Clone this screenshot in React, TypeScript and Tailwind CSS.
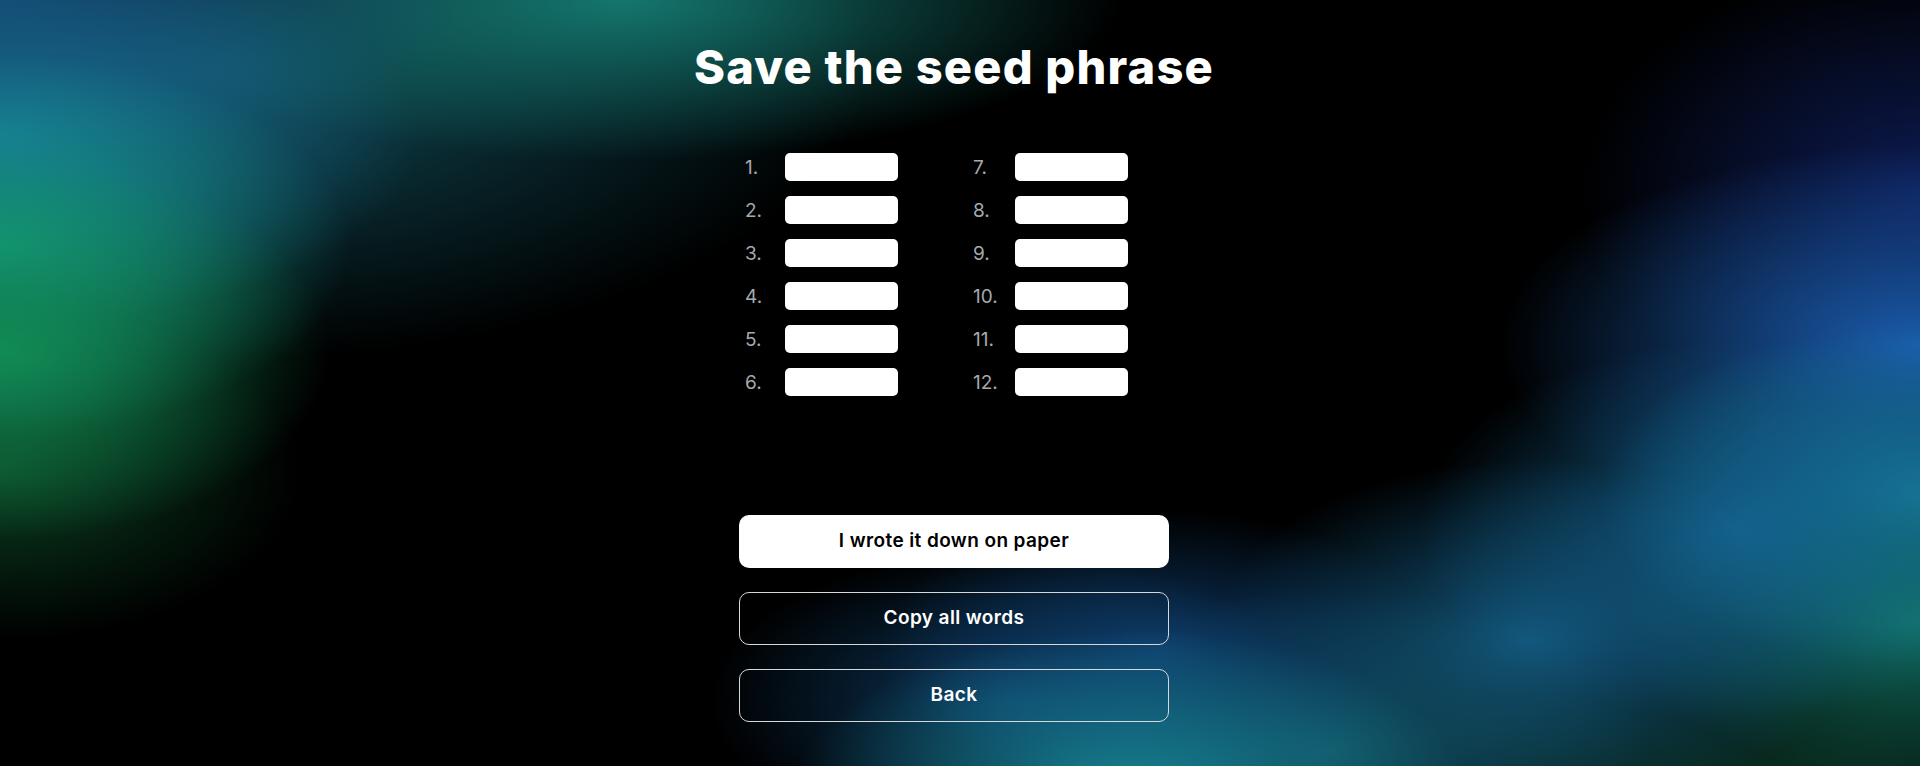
import React from "react";

const left = ["1.", "2.", "3.", "4.", "5.", "6."];
const right = ["7.", "8.", "9.", "10.", "11.", "12."];

function Column({ items, numW }: { items: string[]; numW: string }) {
  return (
    <div className="flex flex-col gap-[15px]">
      {items.map((n) => (
        <div key={n} className="flex items-center h-[28px]">
          <span className={`${numW} text-[19px] leading-none text-[#a6a9ad] font-normal`}>{n}</span>
          <div className="w-[113px] h-[28px] rounded-[5px] bg-white" />
        </div>
      ))}
    </div>
  );
}

const bgLayers =
  "bg-[image:radial-gradient(ellipse_330px_190px_at_0px_350px,rgba(17,140,85,1)_0%,rgba(17,140,85,0)_100%),radial-gradient(ellipse_350px_190px_at_0px_245px,rgba(20,152,132,1)_0%,rgba(20,152,132,0)_100%),radial-gradient(ellipse_420px_190px_at_0px_135px,rgba(24,112,152,1)_0%,rgba(24,112,152,0)_100%),radial-gradient(ellipse_460px_150px_at_0px_0px,rgba(19,64,106,1)_0%,rgba(19,64,106,0)_100%),radial-gradient(ellipse_500px_160px_at_620px_0px,rgba(20,118,110,1)_0%,rgba(20,118,110,0)_100%),radial-gradient(ellipse_650px_300px_at_220px_60px,rgba(18,85,98,0.9)_0%,rgba(18,85,98,0)_100%),radial-gradient(ellipse_300px_170px_at_0px_470px,rgba(12,75,38,0.85)_0%,rgba(12,75,38,0)_100%),radial-gradient(ellipse_340px_170px_at_1130px_800px,rgba(23,136,152,1)_0%,rgba(23,136,152,0)_100%),radial-gradient(ellipse_280px_140px_at_1160px_650px,rgba(16,72,128,0.75)_0%,rgba(16,72,128,0)_100%),radial-gradient(ellipse_300px_150px_at_1010px_700px,rgba(18,78,130,0.7)_0%,rgba(18,78,130,0)_100%),radial-gradient(ellipse_320px_160px_at_1330px_750px,rgba(20,96,118,0.75)_0%,rgba(20,96,118,0)_100%),radial-gradient(ellipse_320px_180px_at_1530px_640px,rgba(20,96,138,0.9)_0%,rgba(20,96,138,0)_100%),radial-gradient(ellipse_320px_190px_at_1740px_530px,rgba(20,102,150,0.9)_0%,rgba(20,102,150,0)_100%),radial-gradient(ellipse_300px_160px_at_1920px_620px,rgba(18,122,104,0.95)_0%,rgba(18,122,104,0)_100%),radial-gradient(ellipse_320px_170px_at_1920px_495px,rgba(22,122,155,1)_0%,rgba(22,122,155,0)_100%),radial-gradient(ellipse_420px_200px_at_1920px_345px,rgba(26,92,172,1)_0%,rgba(26,92,172,0)_100%),radial-gradient(ellipse_340px_230px_at_1920px_190px,rgba(14,30,92,0.9)_0%,rgba(14,30,92,0)_100%),radial-gradient(ellipse_450px_160px_at_1800px_800px,rgba(12,58,42,0.95)_0%,rgba(12,58,42,0)_100%)]";

export default function App() {
  return (
    <div
      className={`w-full h-[766px] overflow-hidden bg-black ${bgLayers}`}
      style={{ fontFamily: "Inter, 'Noto Sans', sans-serif" }}
    >
      <div className="flex flex-col items-center pr-[12px]">
        <h1 className="mt-[43px] text-[47px] leading-none font-extrabold text-white tracking-[1.2px]">
          Save the seed phrase
        </h1>
        <div className="mt-[63px] w-[430px] pl-[6px] flex gap-[75px]">
          <Column items={left} numW="w-[40px]" />
          <Column items={right} numW="w-[42px]" />
        </div>
        <div className="mt-[119px] w-[430px] flex flex-col gap-[24px]">
          <button className="h-[53px] rounded-[10px] bg-white text-black text-[19px] font-semibold tracking-[0.4px]">
            I wrote it down on paper
          </button>
          <button className="h-[53px] rounded-[10px] border-[1.5px] border-[#d8d8d8] text-white text-[19px] font-semibold tracking-[0.4px]">
            Copy all words
          </button>
          <button className="h-[53px] rounded-[10px] border-[1.5px] border-[#d8d8d8] text-white text-[19px] font-semibold tracking-[0.4px]">
            Back
          </button>
        </div>
      </div>
    </div>
  );
}
